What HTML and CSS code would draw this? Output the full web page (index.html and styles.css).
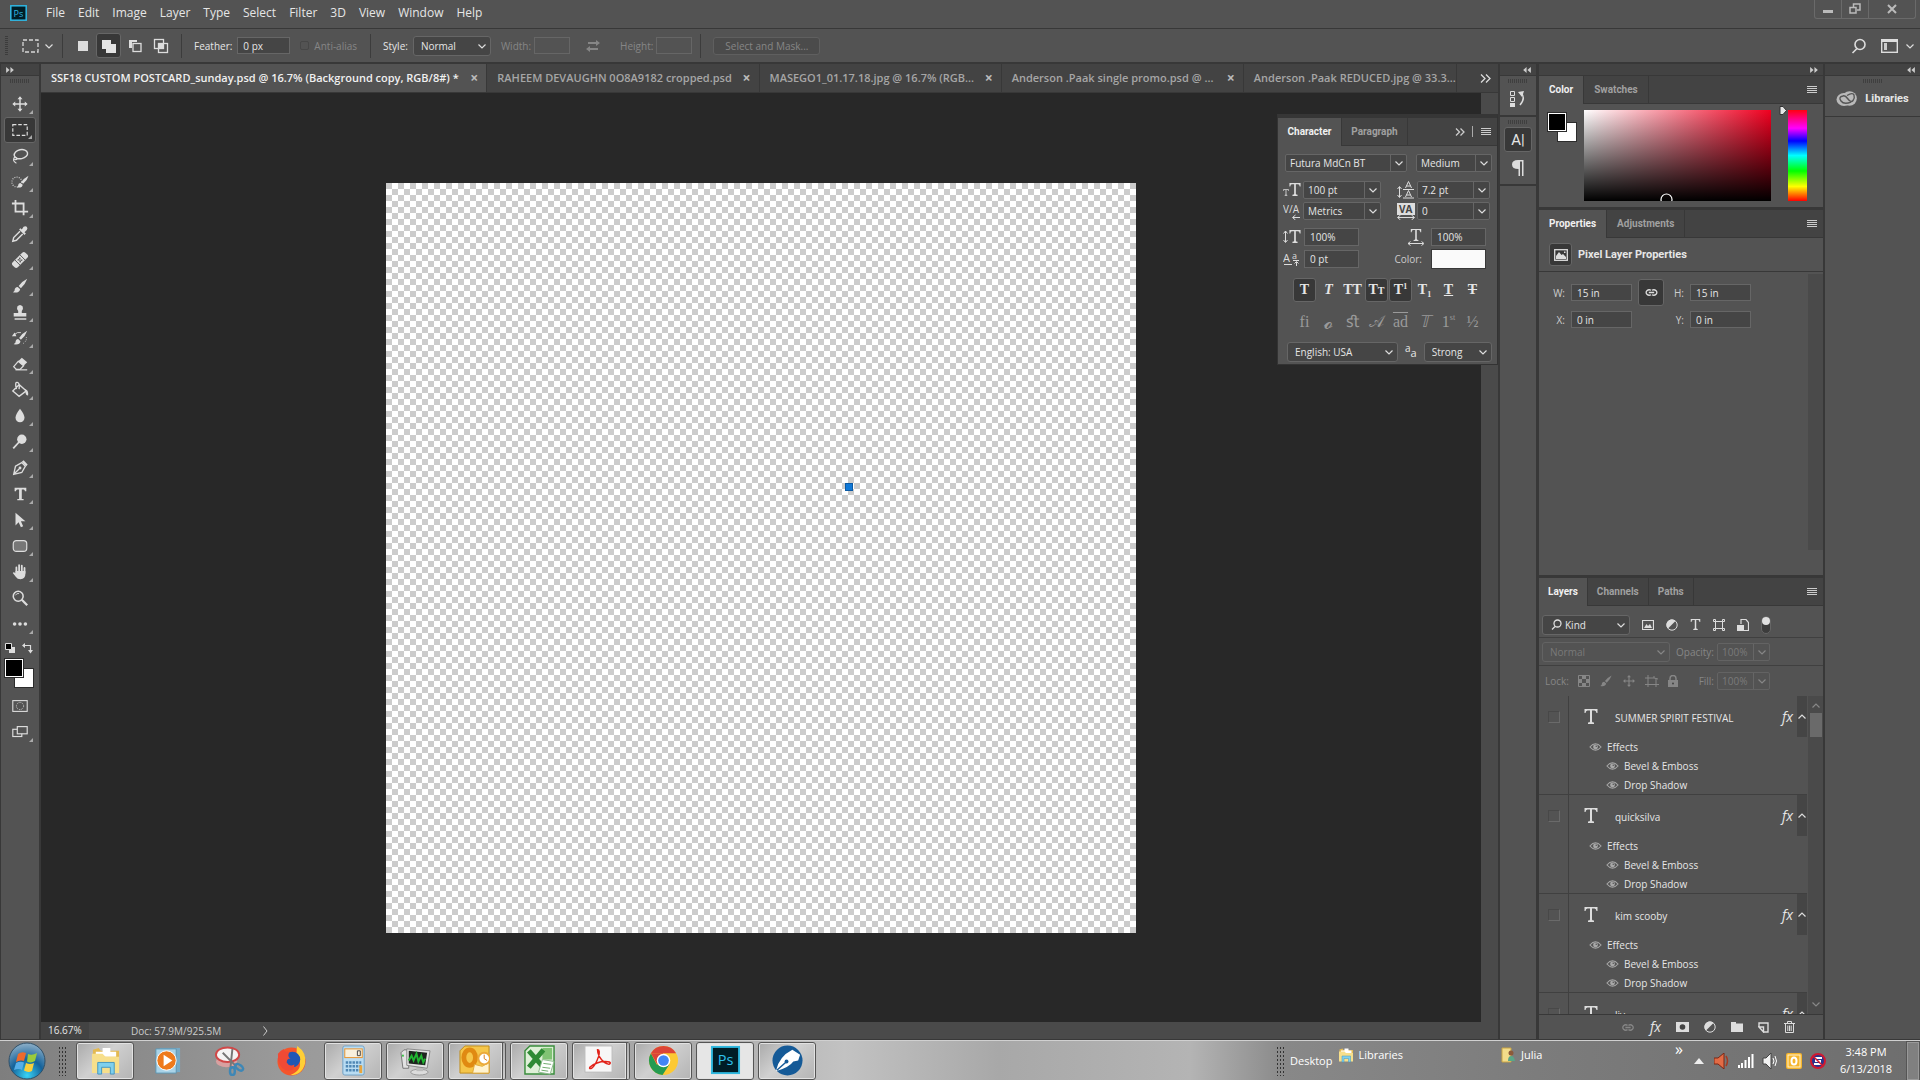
FILE: index.html
```html
<!DOCTYPE html>
<html lang="en">
<head>
<meta charset="utf-8">
<title>SSF18 CUSTOM POSTCARD_sunday.psd</title>
<link rel="stylesheet" href="styles.css">
</head>
<body>
<svg class="defs" aria-hidden="true">
  <symbol id="chev" viewBox="0 0 10 10"><path d="M1.500 3.500 5 7l3.500-3.500" fill="none" stroke="currentColor" stroke-width="1.200"/></symbol>
  <symbol id="eye" viewBox="0 0 14 10"><path d="M1 5Q7-2 13 5Q7 12 1 5Z" fill="none" stroke="currentColor" stroke-width="1.200"/><circle cx="7" cy="5" r="2.600" fill="currentColor"/><circle cx="7.800" cy="4.200" r=".8" fill="#535353"/></symbol>
  <symbol id="bars" viewBox="0 0 10 8"><path d="M0 .5h10M0 2.500h10M0 4.500h10M0 6.500h10" stroke="currentColor"/></symbol>
  <symbol id="typeT" viewBox="0 0 14 15"><path d="M.5 0h13v4h-1q-.3-2.600-2-2.600H8v11q0 1.100 2 1.200V15H4v-1.400q2-.1 2-1.200v-11H3.500Q1.800 1.400 1.500 4h-1Z" fill="currentColor"/></symbol>
  <symbol id="brush" viewBox="0 0 20 20"><path d="M18 2Q12 5 8.500 10l2.500 2.500Q16 8 18 2ZM7.500 11Q4 11 4 15q-.5 1.500-2 2 7 1.500 8.200-3.500Z" fill="currentColor"/></symbol>
  <symbol id="move" viewBox="0 0 20 20"><path d="M10 3v14M3 10h14" stroke="currentColor" stroke-width="1.600"/><path d="m10 1.500 2.800 3.200H7.200Zm0 17 2.800-3.200H7.200ZM1.500 10l3.200-2.800v5.600Zm17 0-3.200-2.800v5.600Z" fill="currentColor"/></symbol>
  <symbol id="link" viewBox="0 0 16 10"><path d="M7.500 2.500A3.500 3 0 1 0 7.500 7.500M8.500 2.500A3.500 3 0 1 1 8.500 7.500M5 5h6" fill="none" stroke="currentColor" stroke-width="1.500"/></symbol>
  <symbol id="adjust" viewBox="0 0 12 12"><circle cx="6" cy="6" r="5.200" fill="none" stroke="currentColor"/><path d="M9.500 2 2 9.500A5 5 0 0 1 9.500 2Z" fill="currentColor"/></symbol>
  <symbol id="folder" viewBox="0 0 32 32"><path d="M3 5 9 3l2 3h19v21H3Z" fill="#e3b951"/><path d="M6 7h7V3h8v4h6v5H6Z" fill="#fff"/><path d="M2 9h11l3 3h14v17H2Z" fill="#f7df8b"/><path d="M8 18h17v12h-4v-7h-9v7H8Z" fill="#7fd0ed" stroke="#4397c0"/></symbol>
</svg>

<header class="menubar">
  <svg class="pslogo" viewBox="0 0 17 16"><rect x=".8" y=".8" width="15.400" height="14.400" fill="#001d26" stroke="#31b7e2" stroke-width="1.500"/><text x="3.500" y="11.500" font-size="9" fill="#31b7e2">Ps</text></svg>
  <nav class="menus">
    <button>File</button><button>Edit</button><button>Image</button><button>Layer</button><button>Type</button><button>Select</button><button>Filter</button><button>3D</button><button>View</button><button>Window</button><button>Help</button>
  </nav>
  <div class="winctl">
    <button aria-label="Minimize"><svg width="10" height="10"><rect y="6" width="10" height="3" fill="#bbb"/></svg></button>
    <button aria-label="Restore"><svg width="12" height="12" fill="none" stroke="#bbb" stroke-width="1.500"><path d="M4.500 4V1h6.500v6H8"/><rect x="1" y="4.500" width="6" height="5.500"/></svg></button>
    <button class="closewin" aria-label="Close"><svg width="10" height="10"><path d="M1 1l8 8M9 1 1 9" stroke="#bbb" stroke-width="2"/></svg></button>
  </div>
</header>

<section class="options">
  <span class="grip"></span>
  <svg class="marq" width="17" height="14"><rect x="1" y="1" width="15" height="12" fill="none" stroke="#d8d8d8" stroke-width="1.300" stroke-dasharray="4 2"/></svg>
  <svg class="c8"><use href="#chev"/></svg>
  <span class="sep"></span>
  <div class="selmodes">
    <button aria-label="New selection"><svg width="16" height="16"><rect x="3" y="3" width="10" height="10" fill="#ddd"/></svg></button>
    <button class="on" aria-label="Add to selection"><svg width="16" height="16"><path d="M1 2h9v4h5v9H5v-4H1Z" fill="#e4e4e4"/></svg></button>
    <button aria-label="Subtract from selection"><svg width="16" height="16"><path d="M2 2h8v2H5v6H2Z" fill="#ddd"/><rect x="6" y="5.500" width="8" height="8" fill="none" stroke="#ddd" stroke-width="1.300"/></svg></button>
    <button aria-label="Intersect with selection"><svg width="16" height="16" fill="none" stroke="#ddd" stroke-width="1.300"><rect x="1.500" y="1.500" width="9" height="9"/><rect x="5.500" y="5.500" width="9" height="9"/><path d="M6 6h4v4H6Z" fill="#ddd"/></svg></button>
  </div>
  <span class="sep"></span>
  <label>Feather: <input class="field w53" value="0 px"></label>
  <label class="anti dim"><input type="checkbox" disabled> Anti-alias</label>
  <span class="sep"></span>
  <label class="stylelab">Style: <span class="sel w78"><select><option>Normal</option></select><svg class="c10"><use href="#chev"/></svg></span></label>
  <label class="dim">Width: <input class="field w36 off" disabled></label>
  <svg class="swap dim" width="16" height="14" fill="none" stroke="currentColor" stroke-width="2"><path d="M3 4h9M4 10h9"/><path d="M11 1v6l4-3ZM5 7v6l-4-3Z" fill="currentColor" stroke="none"/></svg>
  <label class="dim">Height: <input class="field w36 off" disabled></label>
  <span class="sep"></span>
  <button class="mask dim" disabled>Select and Mask...</button>
  <span class="grow"></span>
  <svg width="16" height="16" fill="none" stroke="#ddd" stroke-width="1.600"><circle cx="9" cy="6.500" r="5"/><path d="M6 10.500 1.500 15"/></svg>
  <svg class="wsicon" width="17" height="14"><rect x=".7" y=".7" width="15.600" height="12.600" fill="none" stroke="#ddd" stroke-width="1.400"/><path d="M1 2h15" stroke="#ddd" stroke-width="2"/><path d="M3 4h3v7H3Z" fill="#ccc"/></svg>
  <svg class="c8"><use href="#chev"/></svg>
</section>

<main class="work">
  <aside class="toolcol">
    <div class="colhead left"><svg class="dbl r" viewBox="0 0 9 7"><path d="M0 0l4 3.500L0 7ZM5 0l4 3.500L5 7Z"/></svg></div>
    <div class="tools">
      <span class="hgrip"></span>
      <button class="tool" aria-label="Move"><svg viewBox="0 0 20 20"><use href="#move"/></svg></button>
      <button class="tool on" aria-label="Marquee"><svg viewBox="0 0 20 20"><rect x="2" y="4" width="16" height="12" fill="none" stroke="currentColor" stroke-width="1.300" stroke-dasharray="4 2"/></svg></button>
      <button class="tool" aria-label="Lasso"><svg viewBox="0 0 20 20"><ellipse cx="11" cy="8" rx="7.500" ry="5" transform="rotate(-12 11 8)" fill="none" stroke="currentColor" stroke-width="1.600"/><path d="M4 11q-2 3 1 3t1-2-3 1 3 5" fill="none" stroke="currentColor" stroke-width="1.200"/></svg></button>
      <button class="tool" aria-label="Quick selection"><svg viewBox="0 0 20 20"><circle cx="6.500" cy="10" r="5.500" fill="none" stroke="currentColor" stroke-width="1.300" stroke-dasharray="1 1.500"/><path d="M19.500 3Q14 6 11.500 10l2 2Q18 8.500 19.500 3ZM10.500 11Q8 11 8 14q-.5 1.500-1.500 2 6 1 6.500-3Z" fill="currentColor"/></svg></button>
      <button class="tool" aria-label="Crop"><svg viewBox="0 0 20 20" fill="none" stroke="currentColor" stroke-width="2"><path d="M5 1v13h14M1 5h13v13"/></svg></button>
      <button class="tool" aria-label="Eyedropper"><svg viewBox="0 0 20 20"><path d="M10 7 3 14l-1 4 4-1 7-7" fill="none" stroke="currentColor" stroke-width="1.600"/><path d="m9 5 1.500-1.500L12 5l2-3q2-1.500 3.500 0t0 3.500L15 8l1.500 1.500L15 11Z" fill="currentColor"/></svg></button>
      <button class="tool" aria-label="Healing brush"><svg viewBox="0 0 20 20"><g transform="rotate(-45 10 10)"><rect x="0" y="6" width="20" height="8" rx="2.500" fill="currentColor"/><path d="M6 6v8M14 6v8" stroke="#535353"/><path d="M8 8.500h1.500M10.500 8.500H12M8 11.500h1.500M10.500 11.500H12M9.200 10h1.500" stroke="#444" stroke-width="1.300"/></g></svg></button>
      <button class="tool" aria-label="Brush"><svg viewBox="0 0 20 20"><use href="#brush"/></svg></button>
      <button class="tool" aria-label="Clone stamp"><svg viewBox="0 0 20 20"><path d="M8 9Q6 6.500 7 4q3-3.500 6 0 1 2.500-1 5v2h5v4H3v-4h5ZM4 17h13v1.500H4Z" fill="currentColor"/></svg></button>
      <button class="tool" aria-label="History brush"><svg viewBox="0 0 20 20"><path d="M18 2Q12 5 9 10l2 2Q16 8 18 2ZM8 11Q5 11 5 15l-2 2q7 1 7.500-3.500ZM1 8l3-4 2 4Z" fill="currentColor"/><path d="M4 6q3-3 7-2" fill="none" stroke="currentColor"/><path d="M17 9q1 5-5 8" fill="none" stroke="currentColor" stroke-dasharray="1 1.500"/></svg></button>
      <button class="tool" aria-label="Eraser"><svg viewBox="0 0 20 20"><path d="m12 3 6 5-4 4-6-5Z" fill="currentColor"/><path d="m8 7 6 5-4 4H6l-3-3Z" fill="none" stroke="currentColor" stroke-width="1.400"/><path d="M5 16.500h13" stroke="currentColor" stroke-width="1.300"/></svg></button>
      <button class="tool" aria-label="Paint bucket"><svg viewBox="0 0 20 20"><path d="m9 4 8 7-8 6-7-6ZM6 9Q4 1 7 1.500T9 9" fill="none" stroke="currentColor" stroke-width="1.500"/><path d="M15 9q5 1 4 7-3 0-3-5Z" fill="currentColor"/></svg></button>
      <button class="tool" aria-label="Blur"><svg viewBox="0 0 20 20"><path d="M10 2Q5 8.500 5 12a5 5 0 0 0 10 0Q15 8.500 10 2Z" fill="currentColor"/></svg></button>
      <button class="tool" aria-label="Dodge"><svg viewBox="0 0 20 20"><circle cx="12" cy="7" r="5.200" fill="currentColor"/><path d="m9 10-6.500 7" stroke="currentColor" stroke-width="2"/></svg></button>
      <button class="tool" aria-label="Pen"><svg viewBox="0 0 20 20"><path d="M3 17 5 8l7-4 4 4-4 7ZM3 17l6-6" fill="none" stroke="currentColor" stroke-width="1.500"/><circle cx="10" cy="10" r="1.600" fill="currentColor"/><path d="m12 3 2-1.500L18.500 6 17 8Z" fill="currentColor"/></svg></button>
      <button class="tool" aria-label="Type"><svg viewBox="0 0 20 20"><path d="M4 3h13v4h-1.500q-.2-2-1.500-2h-2v10.500h2V17H7v-1.500h2V5H7Q5.700 5 5.500 7H4Z" fill="currentColor"/></svg></button>
      <button class="tool" aria-label="Path selection"><svg viewBox="0 0 20 20"><path d="M5 2v14l3.500-3.500L11 18l2.500-1-2.500-5.500h5Z" fill="currentColor"/></svg></button>
      <button class="tool" aria-label="Rounded rectangle"><svg viewBox="0 0 20 20"><rect x="2.500" y="4" width="15" height="12" rx="3.500" fill="#777" stroke="currentColor" stroke-width="1.300"/></svg></button>
      <button class="tool" aria-label="Hand"><svg viewBox="0 0 20 20"><path d="M6 11V5M9 10V2.500M12 10V3M15 11V5.500" stroke="currentColor" stroke-width="2" stroke-linecap="round"/><path d="M5 9h11v3q0 6-5.500 6-3.500 0-5-2.500L2 11q1-1.500 3 .5Z" fill="currentColor"/></svg></button>
      <button class="tool plain" aria-label="Zoom"><svg viewBox="0 0 20 20"><circle cx="8" cy="8" r="5.500" fill="none" stroke="currentColor" stroke-width="1.700"/><path d="m12 12 6 6" stroke="currentColor" stroke-width="2.500"/><path d="M5 7q1-2.500 4-2" fill="none" stroke="currentColor"/></svg></button>
      <button class="tool" aria-label="Edit toolbar"><svg viewBox="0 0 20 20"><circle cx="4" cy="10" r="2" fill="currentColor"/><circle cx="10" cy="10" r="2" fill="currentColor"/><circle cx="16" cy="10" r="2" fill="currentColor"/></svg></button>
      <div class="swrow"><svg width="10" height="10"><path d="M4 4h6v6H4Z" fill="#ddd"/><path d="M.5.500h6v6h-6Z" fill="#000" stroke="#ddd"/></svg><svg width="11" height="11" fill="none" stroke="#ddd" stroke-width="1.200"><path d="M3 2.500h5.500V8"/><path d="M3 0v5L0 2.500ZM6 7h5l-2.500 3.500Z" fill="#ddd" stroke="none"/></svg></div>
      <div class="fgbg"><i class="bg"></i><i class="fg"></i></div>
      <button class="tool plain" aria-label="Quick mask"><svg viewBox="0 0 20 20"><rect x="2" y="4" width="16" height="12" fill="none" stroke="currentColor" stroke-width="1.200"/><circle cx="10" cy="10" r="4" fill="none" stroke="currentColor" stroke-dasharray="1 1.100"/></svg></button>
      <button class="tool" aria-label="Screen mode"><svg viewBox="0 0 20 20" fill="#535353" stroke="currentColor" stroke-width="1.300"><rect x="2" y="7" width="10" height="8"/><rect x="7" y="4" width="11" height="8"/></svg></button>
    </div>
  </aside>

  <section class="doc">
    <div class="tabs">
      <div class="tab active"><span>SSF18 CUSTOM POSTCARD_sunday.psd @ 16.7% (Background copy, RGB/8#) *</span><button aria-label="Close">×</button></div>
      <div class="tab"><span>RAHEEM DEVAUGHN 0O8A9182 cropped.psd</span><button aria-label="Close">×</button></div>
      <div class="tab"><span>MASEGO1_01.17.18.jpg @ 16.7% (RGB...</span><button aria-label="Close">×</button></div>
      <div class="tab"><span>Anderson .Paak single promo.psd @ ...</span><button aria-label="Close">×</button></div>
      <div class="tab"><span>Anderson .Paak REDUCED.jpg @ 33.3...</span></div>
      <button class="more" aria-label="More tabs"><svg width="11" height="9" fill="none" stroke="#ddd" stroke-width="1.300"><path d="M1 .5l4 4-4 4M6 .5l4 4-4 4"/></svg></button>
    </div>
    <div class="view">
      <div class="pasteboard"><div class="sheet"><i class="marker"></i></div></div>
      <div class="vscroll"></div>
    </div>
    <footer class="status"><span class="pct">16.67%</span><span class="docinfo">Doc: 57.9M/925.5M</span><button aria-label="Status options"><svg width="5" height="10" fill="none" stroke="#ccc"><path d="M.5.500 4 5 .5 9.500"/></svg></button></footer>

    <section class="char">
      <div class="ptabs">
        <button class="ptab active ct1">Character</button><button class="ptab ct2">Paragraph</button><span class="grow"></span>
        <svg width="10" height="8" fill="none" stroke="#ccc" stroke-width="1.300"><path d="M1 .5 4.500 4 1 7.500M5.500.500 9 4 5.500 7.500"/></svg><i class="vbar"></i><svg class="bars"><use href="#bars"/></svg>
      </div>
      <div class="charbody">
        <div class="fontrow">
          <span class="combo"><input aria-label="Font" value="Futura MdCn BT"><button aria-label="Fonts"><svg class="c10"><use href="#chev"/></svg></button></span>
          <span class="combo"><input aria-label="Font style" value="Medium"><button aria-label="Styles"><svg class="c10"><use href="#chev"/></svg></button></span>
        </div>
        <div class="metrics">
          <svg width="18" height="17"><svg x="6" y="1" width="12" height="13"><use href="#typeT"/></svg><svg x="0" y="7" width="6" height="7"><use href="#typeT"/></svg></svg>
          <span class="combo"><input aria-label="Size" value="100 pt"><button aria-label="Sizes"><svg class="c10"><use href="#chev"/></svg></button></span>
          <svg width="18" height="18" fill="none" stroke="#ddd"><path d="m8.500 7 3-6.500 3 6.500M9.500 5h4M8.500 16l3-6.500 3 6.500M9.500 14h4M6 8.500h11M6 17h11M2.500 6v10M.5 8l2-2.500L4.500 8M.5 14l2 2.500 2-2.500"/></svg>
          <span class="combo"><input aria-label="Leading" value="7.2 pt"><button aria-label="Leadings"><svg class="c10"><use href="#chev"/></svg></button></span>
          <svg width="18" height="17"><text x="0" y="10" font-size="10" fill="#ddd">V/A</text><path d="M10 14.500h7M12.500 12l-3 2.500 3 2.500" fill="none" stroke="#ddd"/></svg>
          <span class="combo"><input aria-label="Kerning" value="Metrics"><button aria-label="Kernings"><svg class="c10"><use href="#chev"/></svg></button></span>
          <svg width="18" height="17"><rect width="18" height="12" fill="#ddd"/><text x="2" y="10" font-size="10" font-weight="700" fill="#444">VA</text><path d="M1 14.500h16M3.500 12l-3 2.500 3 2.500M14.500 12l3 2.500-3 2.500" fill="none" stroke="#ddd"/></svg>
          <span class="combo"><input aria-label="Tracking" value="0"><button aria-label="Trackings"><svg class="c10"><use href="#chev"/></svg></button></span>
        </div>
        <div class="scales">
          <svg width="18" height="16"><svg x="6" y="1" width="12" height="13"><use href="#typeT"/></svg><path d="M2.500 2v11M.5 4.500l2-2.500 2 2.500M.5 11l2 2.500 2-2.500" fill="none" stroke="#ddd"/></svg>
          <input class="field" aria-label="Vertical scale" value="100%">
          <svg class="right" width="18" height="17"><svg x="3" y="0" width="12" height="12"><use href="#typeT"/></svg><path d="M1 14.500h15M3.500 12.500l-2.500 2 2.500 2M14.500 12.500l2.500 2-2.500 2" fill="none" stroke="#ddd"/></svg>
          <input class="field" aria-label="Horizontal scale" value="100%">
          <svg width="18" height="16"><text x="0" y="11" font-size="11" fill="#ddd">A</text><text x="9" y="8" font-size="9" fill="#ddd">a</text><path d="M1 13.500h8M10 9.500h6M13.500 15v-4M11.500 12.500l2-2 2 2" fill="none" stroke="#ddd"/></svg>
          <input class="field" aria-label="Baseline shift" value="0 pt">
          <span class="right">Color:</span><button class="colorbtn" aria-label="Text color"></button>
        </div>
        <div class="glyphs">
          <button class="on"><b>T</b></button><button><i>T</i></button><button>TT</button><button class="on">T<small>T</small></button><button class="on">T<sup>1</sup></button><button>T<sub>1</sub></button><button><u>T</u></button><button><s>T</s></button>
        </div>
        <div class="glyphs ot">
          <button>fi</button><button class="swash">&#x1D4F8;</button><button>ﬆ</button><button>&#x1D49C;</button><button class="over">ad</button><button><i>&#x1D54B;</i></button><button>1<sup>st</sup></button><button>½</button>
        </div>
        <div class="langrow">
          <span class="sel lang"><select aria-label="Language"><option>English: USA</option></select><svg class="c10"><use href="#chev"/></svg></span>
          <span class="aa"><sup>a</sup>a</span>
          <span class="sel"><select aria-label="Anti-aliasing"><option>Strong</option></select><svg class="c10"><use href="#chev"/></svg></span>
        </div>
      </div>
    </section>
  </section>

  <aside class="dock">
    <div class="colhead"><svg class="dbl" viewBox="0 0 9 7"><path d="M4 0 0 3.500 4 7ZM9 0 5 3.500 9 7Z"/></svg></div>
    <div class="dgroup"><span class="hgrip"></span><button aria-label="History"><svg width="18" height="18"><path d="M1.500 1.500h4v4h-4ZM1.500 7.500h4v4h-4Z" fill="none" stroke="#ddd"/><path d="M1 13h5v4H1ZM9 2l6-1-2 6Z" fill="#ddd"/><path d="M12 3q5 5-1 12" fill="none" stroke="#ddd" stroke-width="1.500"/></svg></button></div>
    <div class="dgroup two"><span class="hgrip"></span><button class="on" aria-label="Character"><span class="abar">A|</span></button><button aria-label="Paragraph"><svg width="12" height="16"><path d="M11.500 0v16H10V1.500H8V16H6.500V9Q0 9 0 4.500T6 0Z" fill="#ddd"/></svg></button></div>
    <div class="fill"></div>
  </aside>

  <aside class="panels">
    <div class="colhead"><svg class="dbl" viewBox="0 0 9 7"><path d="M0 0l4 3.500L0 7ZM5 0l4 3.500L5 7Z"/></svg></div>
    <section class="panel">
      <div class="ptabs"><button class="ptab active">Color</button><button class="ptab">Swatches</button><span class="grow"></span><svg class="bars"><use href="#bars"/></svg></div>
      <div class="colorbody">
        <div class="fgbg big"><i class="bg"></i><i class="fg"></i></div>
        <div class="field2d"><svg class="ring" width="13" height="8"><circle cx="6.500" cy="6.500" r="5.500" fill="none" stroke="#fff" stroke-width="1.200"/></svg></div>
        <svg class="huearrow" width="8" height="9"><path d="M1 .5h3L7.500 4.500 4 8.500H1Z" fill="#e6e6e6" stroke="#333"/></svg>
        <div class="hue"></div>
      </div>
    </section>
    <section class="panel props">
      <div class="ptabs"><button class="ptab active">Properties</button><button class="ptab">Adjustments</button><span class="grow"></span><svg class="bars"><use href="#bars"/></svg></div>
      <div class="phead"><span class="pic"><svg width="14" height="12"><rect x=".7" y=".7" width="12.600" height="10.600" fill="none" stroke="#ddd" stroke-width="1.300"/><path d="M2 10V7l3-4 2.500 3L9 5l3 3v2Z" fill="#ddd"/><path d="M10 2.500h1.500V4H10Z" fill="#ddd"/></svg></span><b>Pixel Layer Properties</b></div>
      <div class="pbody">
        <div class="xywh">
          <label for="pw">W:</label><input id="pw" class="field" value="15 in"><button class="linkbtn" aria-label="Link"><svg width="15" height="9"><use href="#link"/></svg></button><label for="ph">H:</label><input id="ph" class="field" value="15 in">
          <label for="px">X:</label><input id="px" class="field" value="0 in"><span></span><label for="py">Y:</label><input id="py" class="field" value="0 in">
        </div>
        <div class="pscroll"></div>
      </div>
    </section>
    <section class="panel layers">
      <div class="ptabs"><button class="ptab active">Layers</button><button class="ptab">Channels</button><button class="ptab">Paths</button><span class="grow"></span><svg class="bars"><use href="#bars"/></svg></div>
      <div class="lrow filter">
        <span class="sel w88 kind"><svg class="mag" width="11" height="11" fill="none" stroke="#ddd" stroke-width="1.300"><circle cx="6.500" cy="4.500" r="3.500"/><path d="M4 7.500 1 10.500"/></svg><select aria-label="Filter kind"><option>Kind</option></select><svg class="c10"><use href="#chev"/></svg></span>
        <div class="ficons">
          <svg width="12" height="12"><path d="M.5 1.500h11v9H.5Z" fill="none" stroke="#ddd" stroke-width="1.200"/><path d="m2 9 2.500-4L6 7l2-2 2 4Z" fill="#ddd"/></svg>
          <svg width="12" height="12"><use href="#adjust"/></svg>
          <svg width="11" height="11"><use href="#typeT"/></svg>
          <svg width="12" height="12" fill="none" stroke="#ddd"><path d="M2.500 2.500h7v7h-7Z"/><path d="M.5.500h2v2h-2ZM9.500.500h2v2h-2ZM.5 9.500h2v2h-2ZM9.500 9.500h2v2h-2Z"/></svg>
          <svg width="12" height="12"><path d="M4 5V.5h5l2.500 3v8H7" fill="none" stroke="#ddd" stroke-width="1.200"/><path d="M0 6h7v6H0Z" fill="#ddd"/></svg>
        </div>
        <svg class="toggle" width="10" height="18"><rect x=".5" y=".5" width="9" height="17" rx="4.500" fill="#3c3c3c" stroke="#666"/><circle cx="5" cy="5" r="4" fill="#e0e0e0"/></svg>
      </div>
      <div class="lrow dim">
        <span class="sel w128 off"><select aria-label="Blend mode" disabled><option>Normal</option></select><svg class="c10"><use href="#chev"/></svg></span>
        <label class="pctlab" for="op">Opacity:</label><span class="combo off"><input id="op" value="100%" disabled><button aria-label="Opacity slider" disabled><svg class="c10"><use href="#chev"/></svg></button></span>
      </div>
      <div class="lrow lock dim">
        <span class="locklab">Lock:</span>
        <div class="licons">
          <svg width="12" height="12"><path d="M.5.500h11v11H.5Z" fill="none" stroke="currentColor"/><path d="M4 1h4v3H4ZM1 4h3v4H1ZM8 4h3v4H8ZM4 8h4v3H4Z" fill="currentColor"/></svg>
          <svg width="14" height="14"><use href="#brush"/></svg>
          <svg width="14" height="14"><use href="#move"/></svg>
          <svg width="14" height="12" fill="none" stroke="currentColor"><path d="M3 0v12M0 3h9M11 3v9M0 9.500h14M9 1v2l4 1"/></svg>
          <svg width="10" height="12"><path d="M0 5h10v7H0Z" fill="currentColor"/><path d="M2 5V3.500a3 3 0 0 1 6 0V5" fill="none" stroke="currentColor" stroke-width="1.500"/><circle cx="5" cy="8.500" r="1" fill="#444"/></svg>
        </div>
        <label class="pctlab fill-label" for="fl">Fill:</label><span class="combo off"><input id="fl" value="100%" disabled><button aria-label="Fill slider" disabled><svg class="c10"><use href="#chev"/></svg></button></span>
      </div>
      <div class="listwrap">
        <ul class="list">
          <li><span class="vis"><input type="checkbox" aria-label="Show layer"></span><div class="lay"><div class="lname"><svg width="14" height="15"><use href="#typeT"/></svg><span>SUMMER SPIRIT FESTIVAL</span><em>fx</em><button aria-label="Collapse"><svg class="c8 up"><use href="#chev"/></svg></button></div><p><svg class="eye"><use href="#eye"/></svg>Effects</p><p class="in"><svg class="eye"><use href="#eye"/></svg>Bevel &amp; Emboss</p><p class="in"><svg class="eye"><use href="#eye"/></svg>Drop Shadow</p></div></li>
          <li><span class="vis"><input type="checkbox" aria-label="Show layer"></span><div class="lay"><div class="lname"><svg width="14" height="15"><use href="#typeT"/></svg><span>quicksilva</span><em>fx</em><button aria-label="Collapse"><svg class="c8 up"><use href="#chev"/></svg></button></div><p><svg class="eye"><use href="#eye"/></svg>Effects</p><p class="in"><svg class="eye"><use href="#eye"/></svg>Bevel &amp; Emboss</p><p class="in"><svg class="eye"><use href="#eye"/></svg>Drop Shadow</p></div></li>
          <li><span class="vis"><input type="checkbox" aria-label="Show layer"></span><div class="lay"><div class="lname"><svg width="14" height="15"><use href="#typeT"/></svg><span>kim scooby</span><em>fx</em><button aria-label="Collapse"><svg class="c8 up"><use href="#chev"/></svg></button></div><p><svg class="eye"><use href="#eye"/></svg>Effects</p><p class="in"><svg class="eye"><use href="#eye"/></svg>Bevel &amp; Emboss</p><p class="in"><svg class="eye"><use href="#eye"/></svg>Drop Shadow</p></div></li>
          <li><span class="vis"><input type="checkbox" aria-label="Show layer"></span><div class="lay"><div class="lname"><svg width="14" height="15"><use href="#typeT"/></svg><span>liv</span><em>fx</em><button aria-label="Collapse"><svg class="c8 up"><use href="#chev"/></svg></button></div></div></li>
        </ul>
        <div class="lscroll"><svg class="c8 up"><use href="#chev"/></svg><i></i><svg class="c8"><use href="#chev"/></svg></div>
      </div>
      <div class="lfoot">
        <button class="dim" aria-label="Link layers"><svg width="14" height="9"><use href="#link"/></svg></button>
        <button aria-label="Layer style"><em>fx</em></button>
        <button aria-label="Add mask"><svg width="13" height="10"><path d="M0 0h13v10H0Z" fill="#ddd"/><circle cx="6.500" cy="5" r="2.800" fill="#444"/></svg></button>
        <button aria-label="Adjustment layer"><svg width="12" height="12"><use href="#adjust"/></svg></button>
        <button aria-label="New group"><svg width="12" height="10"><path d="M0 0h5v1.500h7V10H0Z" fill="#ddd"/></svg></button>
        <button aria-label="New layer"><svg width="11" height="11" fill="none" stroke="#ddd" stroke-width="1.400"><path d="M1 5V1h9v9H5.500ZM1 5h4.500v5Z"/></svg></button>
        <button aria-label="Delete"><svg width="11" height="12" fill="none" stroke="#ddd"><path d="M0 2.500h11M3.500 2V.5h4V2M1.500 3v8.500h8V3M3.800 4.500v5.500M5.500 4.500v5.500M7.200 4.500v5.500"/></svg></button>
      </div>
    </section>
  </aside>

  <aside class="libs">
    <div class="colhead"><svg class="dbl" viewBox="0 0 9 7"><path d="M4 0 0 3.500 4 7ZM9 0 5 3.500 9 7Z"/></svg></div>
    <div class="libgroup"><span class="hgrip"></span><button><svg width="22" height="16"><ellipse cx="8" cy="8.500" rx="7.500" ry="6.500" fill="#b9b9b9"/><circle cx="13.500" cy="7.500" r="7.300" fill="#b9b9b9"/><path d="M15 11Q8 14 5 10t2-5q2-1 5 3t5 1.500 1-5.500-7 .5" fill="none" stroke="#555" stroke-width="1.400"/></svg><b>Libraries</b></button></div>
    <div class="fill"></div>
  </aside>
</main>

<footer class="taskbar">
  <button class="start" aria-label="Start"><svg width="38" height="38" viewBox="0 0 38 38"><defs><radialGradient id="orb" cx=".5" cy=".9" r=".9"><stop offset="0" stop-color="#38d3f5"/><stop offset=".5" stop-color="#14629b"/><stop offset="1" stop-color="#8fb0c8"/></radialGradient></defs><circle cx="19" cy="19" r="18" fill="url(#orb)" stroke="#305068"/><path d="M10 12q4-3 8-1l-2 8q-4-1.500-8 1Z" fill="#ee6a2c"/><path d="M20 12q4 2 9-1l-2 8q-4 2.500-8 .5Z" fill="#9bcb3c"/><path d="M8 21q4-2 8-.5l-2 7.500q-3-2-8 0Z" fill="#56aee8"/><path d="M18 21q4 2 8 0l-2 8q-4 2-8-.5Z" fill="#f9cf3c"/></svg></button>
  <span class="dots"></span>
  <div class="apps">
    <button class="app run" aria-label="Explorer"><svg viewBox="0 0 32 32"><use href="#folder"/></svg></button>
    <button class="app" aria-label="Media player"><svg viewBox="0 0 32 32"><path d="M8 3h21v25H8Z" fill="#77aac6"/><path d="M4 4h21v25H4Z" fill="#a9d3e8" stroke="#5e94b0"/><circle cx="15" cy="16" r="10" fill="#ee7a1c" stroke="#fff"/><path d="m12 10 9 6-9 6Z" fill="#fff"/></svg></button>
    <button class="app" aria-label="Snipping tool"><svg viewBox="0 0 32 32"><ellipse cx="13" cy="17" rx="11" ry="6" fill="#d8a0a0"/><ellipse cx="14" cy="10" rx="12" ry="7.500" fill="#f4f4f4" stroke="#d04848" stroke-width="2"/><path d="m9 8 14 14M19 4l-2 19" stroke="#777" stroke-width="2"/><ellipse cx="19" cy="27" rx="2.500" ry="4" fill="none" stroke="#3e87b6" stroke-width="2.500"/><ellipse cx="26" cy="23" rx="4.500" ry="2.500" transform="rotate(35 26 23)" fill="none" stroke="#3e87b6" stroke-width="2.500"/></svg></button>
    <button class="app" aria-label="Firefox"><svg viewBox="0 0 32 32"><circle cx="16" cy="17" r="14.500" fill="#f5552b"/><path d="M22 1q10 7 8 18-3 12-15 12 14-6 8-17-3-6-1-13Z" fill="#ffcf36"/><circle cx="17" cy="15" r="8" fill="#2157b5"/><path d="M2 9q3-4 6-5 0 3 6 3-3 5 1 7-4 0-4 4 3 5 8 2 0 8-9 6-9-4-8-17Z" fill="#f04a35"/></svg></button>
    <button class="app run" aria-label="Calculator"><svg viewBox="0 0 32 32"><rect x="5" y="1" width="22" height="30" rx="2" fill="#b9dcf2" stroke="#6fa0c4"/><rect x="7" y="4" width="18" height="9" fill="#f8f0dc" stroke="#e6922e"/><path d="M20 6h3v5h-3Z" fill="none" stroke="#444"/><path d="M8 18h16M8 22h16M8 26h16" stroke="#4f87b4" stroke-width="2.500" stroke-dasharray="2.500 1"/><path d="M22 21h3v8h-3Z" fill="#e9a53c"/></svg></button>
    <button class="app run" aria-label="Monitor"><svg viewBox="0 0 32 32"><path d="M1 8 4 5h5v19H3Z" fill="#e2e2e2" stroke="#777"/><path d="M2 10h2v2H2Z" fill="#3dc24a"/><ellipse cx="20" cy="28" rx="9" ry="3" fill="#dcdcdc" stroke="#999"/><path d="M17 22h7v5h-7Z" fill="#bbb"/><path d="m7 4 24 2-3 18-21-3Z" fill="#e4e4e4" stroke="#888"/><path d="m9 6 19 2-2 13-17-2Z" fill="#1d241e"/><path d="m9 16 3-5 2 5 3-7 2 8 3-6 2 7 2-4" fill="none" stroke="#20b531" stroke-width="2"/></svg></button>
    <button class="app run stack" aria-label="Outlook"><svg viewBox="0 0 32 32"><path d="M6 1h25v28H1V6Z" fill="#f5c64a" stroke="#c08b19"/><ellipse cx="11" cy="13" rx="6" ry="8" fill="none" stroke="#e08a12" stroke-width="5"/><path d="m14 29 2-9 8 2 7-4v11Z" fill="#fff3cf" stroke="#e0a93a"/><circle cx="26" cy="14" r="6" fill="#fff" stroke="#eba93b" stroke-width="2"/><path d="M26 10v4l3 2" fill="none" stroke="#d77a18"/></svg></button>
    <button class="app run" aria-label="Excel"><svg viewBox="0 0 32 32"><path d="M6 1h25v29H1V6Z" fill="#dff0d8" stroke="#3a8d3c" stroke-width="1.500"/><path d="M19 3h10v12H19Z" fill="#80c374"/><path d="m5 6 15 17M20 5 5 23" stroke="#2f8a35" stroke-width="5"/><path d="m19 15 12 2-4 13-12-2Z" fill="#fff" stroke="#8bb88b"/><path d="m20 19 8 1m-9 3 8 1m-9 2 7 1" stroke="#6daa6b"/></svg></button>
    <button class="app run stack" aria-label="Acrobat"><svg viewBox="0 0 32 32"><path d="M2 1h28v27H2Z" fill="#f7f7f7" stroke="#bbb"/><path d="M15 5q3 0 1 7-3 9-7 12-3 1-2-1 7-6 16-6 6 0 5 2t-6-1Q15 12 15 5Z" fill="none" stroke="#e2231a" stroke-width="1.500"/></svg></button>
    <button class="app run" aria-label="Chrome"><svg viewBox="0 0 32 32"><circle cx="16" cy="16" r="15" fill="#fcc934"/><path d="M3 8.500A15 15 0 0 1 29 8.500H16Z" fill="#dc4437"/><path d="M3 8.500A15 15 0 0 0 15 31l7-11-13 0Z" fill="#259b51"/><path d="M3 8.500 9.500 20 16 8.500Z" fill="#dc4437"/><circle cx="16" cy="16" r="7" fill="#fff"/><circle cx="16" cy="16" r="5.500" fill="#4285f4"/></svg></button>
    <button class="app run lit" aria-label="Photoshop"><svg viewBox="0 0 32 32"><rect x="2" y="2" width="28" height="27" fill="#001d26" stroke="#2fb8df" stroke-width="2"/><text x="8" y="21" font-size="15" fill="#2fc1ec">Ps</text></svg></button>
    <button class="app run" aria-label="Pen app"><svg viewBox="0 0 32 32"><circle cx="16" cy="16" r="15.500" fill="#155a97"/><path d="M4 27Q7 12 21 5l8 5-2 6-5 1Q18 23 4 27Z" fill="#fff"/><path d="m5 26 9-8" stroke="#155a97" stroke-width="1.500"/><circle cx="15" cy="17" r="2" fill="#155a97"/></svg></button>
  </div>
  <span class="grow"></span>
  <span class="dots"></span>
  <div class="deskbar"><span>Desktop</span><a href="#lib"><svg width="16" height="16" viewBox="0 0 32 32"><use href="#folder"/></svg>Libraries</a><a class="julia" href="#julia"><svg width="16" height="16"><path d="M1 1h9v14H1Z" fill="#f3dc8a" stroke="#c8a445"/><circle cx="10" cy="6" r="2.500" fill="#8c5a3a"/><path d="M7 14q0-5 3-5t4 5Z" fill="#5aa687"/></svg>Julia</a><button aria-label="More">»</button></div>
  <div class="tray">
    <svg width="10" height="6"><path d="M0 6 5 0l5 6Z" fill="#eee"/></svg>
    <svg width="16" height="16"><path d="M0 5h4l6-5v16l-6-5H0Z" fill="#e26b45" stroke="#7a2715"/><path d="M12 3q3 5 0 10" fill="none" stroke="#a43a22" stroke-width="1.500"/></svg>
    <svg width="16" height="14"><path d="M0 11h2v3H0ZM3 9h2v5H3ZM6.500 6h2v8h-2ZM10 3h2v11h-2ZM13.500 0h2v14h-2Z" fill="#fff"/></svg>
    <svg width="16" height="16"><path d="M1 5h3l5-5v16l-5-5H1Z" fill="#f2f2f2" stroke="#444"/><path d="M11 5q2 3 0 6M13 3q3 5 0 10" fill="none" stroke="#fff"/></svg>
    <svg width="16" height="16"><rect width="16" height="16" rx="2" fill="#f6b52c"/><rect x="2" y="2" width="12" height="12" fill="none" stroke="#fff4cf"/><ellipse cx="8" cy="8" rx="2.500" ry="3.500" fill="none" stroke="#fff" stroke-width="2"/></svg>
    <svg width="16" height="16"><circle cx="8" cy="8" r="7" fill="#28358e" stroke="#d01830" stroke-width="2"/><path d="M12 5H6v3h4v3H4" fill="none" stroke="#fff" stroke-width="2"/><path d="m3 3 10 10" stroke="#d01830" stroke-width="1.500"/></svg>
  </div>
  <div class="clock"><span>3:48 PM</span><span>6/13/2018</span></div>
  <button class="peek" aria-label="Show desktop"></button>
</footer>
</body>
</html>
```
FILE: styles.css
```css
* { box-sizing: border-box; }
html, body { height: 100%; }
body {
  margin: 0;
  display: flex;
  flex-direction: column;
  overflow: hidden;
  background: #535353;
  color: #e6e6e6;
  font: 10px/14px "Open Sans", Roboto, sans-serif;
}
button, input, select { font: inherit; color: inherit; margin: 0; padding: 0; border: 0; background: none; border-radius: 0; }
button { display: flex; align-items: center; justify-content: center; }
svg { display: block; flex: none; color: #ddd; }
ul, p { margin: 0; padding: 0; list-style: none; }
.defs { position: absolute; width: 0; height: 0; }
.grow { flex: 1; }
.dim, .dim svg { color: #868686; }
.c8, .c10 { width: 10px; height: 10px; }
.up { transform: rotate(180deg); }

/* menu bar */
.menubar { flex: none; height: 29px; display: flex; align-items: flex-start; border-bottom: 1px solid #383838; padding-left: 10px; }
.pslogo { width: 17px; height: 16px; margin-top: 5px; }
.menus { display: flex; gap: 13px; padding: 5px 0 0 19px; flex: 1; }
.menus button { font: 12px/16px "Open Sans", sans-serif; }
.winctl { display: flex; height: 19px; margin-right: 4px; border: 1px solid #6a6a6a; border-top: 0; border-radius: 0 0 3px 3px; }
.winctl button { width: 27px; border-right: 1px solid #6a6a6a; }
.winctl .closewin { width: 46px; border: 0; }

/* options bar */
.options { flex: none; height: 34px; display: flex; align-items: center; padding: 0 5px; border-bottom: 1px solid #383838; }
.grip { width: 3px; height: 20px; background: repeating-linear-gradient(#3c3c3c 0 1px, transparent 1px 2px); margin-right: 14px; }
.options .marq { margin-right: 5px; }
.sep { width: 1px; height: 24px; background: #3c3c3c; margin: 0 12px 0 8px; }
.selmodes { display: flex; gap: 1px; margin-left: -5px; }
.selmodes button { width: 25px; height: 25px; border-radius: 3px; }
.selmodes .on, .glyphs .on, .tool.on, .dgroup .on, .linkbtn, .pic { background: #383838; border: 1px solid #666; border-radius: 3px; }
.options label { display: flex; align-items: center; gap: 5px; }
.options .stylelab ~ label { gap: 3px; }
.field { height: 17px; border: 1px solid #666; background: #454545; padding: 0 5px; width: 100%; min-width: 0; }
.options .w53 { width: 53px; }
.w36 { width: 36px; }
.w78 { width: 78px; }
.w88 { width: 88px; }
.w128 { width: 128px; }
.field.off { background: transparent; }
.options .anti { margin: 0 5px 0 10px; }
.anti input { appearance: none; width: 9px; height: 9px; border: 1px solid #474747; border-radius: 2px; }
.stylelab { margin-right: 10px; }
.swap { margin: 0 19px 0 15px; }
.mask { height: 18px; width: 107px; border: 1px solid #5f5f5f; background: #4b4b4b; border-radius: 3px; color: #868686; }
.wsicon { margin: 0 7px 0 14px; }
.sel { position: relative; display: flex; align-items: center; height: 20px; border: 1px solid #666; border-radius: 3px; background: #454545; }
.sel select { appearance: none; flex: 1; height: 100%; padding: 0 20px 0 7px; outline: 0; opacity: 1; }
.sel .c10 { position: absolute; right: 3px; pointer-events: none; }
.sel.off, .combo.off { background: transparent; border-color: #636363; color: #7a7a7a; }

/* work area */
.work { flex: 1; min-height: 0; display: flex; background: #383838; padding: 1px 0; }
.colhead { flex: none; height: 12px; background: #434343; display: flex; align-items: center; justify-content: flex-end; padding-right: 5px; border-bottom: 1px solid #383838; }
.colhead.left { justify-content: flex-start; padding-left: 5px; }
.dbl { width: 8px; height: 6px; fill: #ccc; }
.hgrip { height: 4px; width: 20px; background: repeating-linear-gradient(90deg, #3f3f3f 0 1px, transparent 1px 2px); }
.toolcol { width: 41px; padding: 0 2px 0 1px; display: flex; flex-direction: column; flex: none; }
.tools { flex: 1; background: #535353; display: flex; flex-direction: column; align-items: center; padding-top: 3px; }
.tools .hgrip { margin-bottom: 8px; }
.tool { position: relative; width: 32px; height: 26px; flex: none; }
.tool svg { width: 18px; height: 18px; }
.tool::after { content: ""; position: absolute; right: 3px; bottom: 3px; border: 2px solid transparent; border-right-color: #aaa; border-bottom-color: #aaa; }
.tool.plain::after { display: none; }
.swrow { display: flex; gap: 7px; padding: 6px 0; height: 21px; margin-right: 2px; }
.fgbg { position: relative; width: 30px; height: 30px; margin: 0 2px 5px 0; }
.fgbg i { position: absolute; width: 20px; height: 20px; border: 1px solid #2c2c2c; }
.fgbg .fg { left: 0; top: 0; background: #000; box-shadow: inset 0 0 0 1px #fff; }
.fgbg .bg { right: 0; bottom: 0; background: #fff; }

/* document */
.doc { flex: 1; min-width: 0; display: flex; flex-direction: column; position: relative; }
.tabs { flex: none; height: 29px; display: grid; grid-template-columns: 446fr 272fr 242fr 242fr 213fr 41px; background: #434343; border-bottom: 1px solid #383838; }
.tab { display: flex; align-items: center; padding: 0 8px 0 10px; border-right: 1px solid #383838; color: #a6a6a6; font: 600 11px/14px "Open Sans", sans-serif; white-space: nowrap; overflow: hidden; min-width: 0; }
.tab span { flex: 1; }
.tab.active { background: #535353; color: #f0f0f0; }
.tab button { font: 700 14px/14px "Open Sans", sans-serif; color: #bbb; }
.more { padding-left: 16px; }
.view { flex: 1; min-height: 0; display: flex; background: #282828; }
.pasteboard { flex: 1; display: flex; align-items: center; justify-content: center; }
.sheet { position: relative; width: 750px; height: 750px; background: repeating-conic-gradient(#fff 0 25%, #ccc 0 50%) 0 0 / 12px 12px; }
.marker { position: absolute; left: 459px; top: 300px; width: 8px; height: 8px; background: #0f78d7; border: 1px solid #0b5aa4; }
.vscroll { width: 17px; background: #4a4a4a; }
.status { flex: none; height: 17px; display: flex; align-items: center; background: #4a4a4a; }
.pct { width: 48px; padding-left: 7px; background: #434343; height: 100%; line-height: 17px; }
.docinfo { width: 174px; padding-left: 42px; color: #ccc; }

/* panel tabs */
.ptabs { height: 28px; background: #434343; display: flex; align-items: center; padding-right: 6px; flex: none; border-bottom: 1px solid #383838; }
.ptab { height: 28px; padding: 0 10px; font: 700 10px/14px Roboto, sans-serif; color: #a0a0a0; border-right: 1px solid #383838; }
.ptab.active { background: #535353; color: #f0f0f0; }
.layers .ptab { padding: 0 9px; }
.bars { width: 10px; height: 8px; color: #ccc; }
.combo { display: flex; height: 18px; border: 1px solid #666; border-radius: 2px; background: #454545; min-width: 0; }
.combo input { flex: 1; width: 0; min-width: 0; padding-left: 4px; }
.combo button { width: 16px; border-left: 1px solid #666; }

/* character panel floats over the canvas */
.char { position: absolute; right: 0; top: 50px; width: 221px; background: #535353; border: 1px solid #333; border-top: 4px solid #363636; }
.ct1 { width: 64px; }
.ct2 { width: 66px; }
.char .ptab { padding: 0; }
.vbar { width: 1px; height: 11px; background: #aaa; margin: 0 8px 0 7px; }
.charbody { padding: 8px 5px 2px 7px; }
.fontrow { display: grid; grid-template-columns: 122fr 76fr; gap: 9px; }
.metrics { display: grid; grid-template-columns: 18px 78fr 32px 73fr; column-gap: 2px; row-gap: 3px; margin: 9px 2px 8px -2px; align-items: center; }
.metrics > svg:nth-child(4n+3) { justify-self: end; }
.scales { display: grid; grid-template-columns: 18px 55px 1fr 55px; column-gap: 3px; row-gap: 3px; align-items: center; margin: 0 6px 9px -2px; }
.scales .right { justify-self: end; margin-right: 3px; color: #ccc; }
.scales span.right { margin-right: 6px; }
.scales .field { height: 18px; }
.colorbtn { height: 20px; background: #fafafa; border: 1px solid #383838; }
.glyphs { display: grid; grid-template-columns: repeat(8, 23px); column-gap: 1px; margin-left: 8px; font: 700 14px/14px "Liberation Serif", serif; }
.glyphs button { height: 24px; font: inherit; }
.glyphs small { font-size: 10px; align-self: flex-end; margin-bottom: 3px; }
.glyphs sup, .glyphs sub { font-size: 8px; line-height: 8px; }
.glyphs sup { align-self: flex-start; margin-top: 4px; }
.glyphs sub { align-self: flex-end; margin-bottom: 3px; }
.ot { margin-top: 8px; color: #9a9a9a; }
.ot button { font-weight: 400; font-size: 16px; }
.ot .swash { font-size: 20px; }
.over { text-decoration: overline; }
.langrow { display: flex; align-items: center; gap: 7px; margin: 8px 0 0 2px; }
.langrow .sel { width: 68px; }
.langrow .lang { width: 111px; flex: none; }
.aa { font-size: 11px; }
.aa sup { font-size: 10px; line-height: 8px; }

/* icon dock */
.dock { flex: none; width: 40px; padding: 0 2px; display: flex; flex-direction: column; }
.dgroup { background: #535353; height: 40px; border-bottom: 1px solid #383838; display: flex; flex-direction: column; align-items: center; padding-top: 3px; gap: 7px; margin-bottom: 1px; }
.dgroup.two { height: 68px; gap: 3px; }
.dgroup.two button { width: 28px; height: 25px; }
.abar { font: 15px/18px Roboto, sans-serif; white-space: nowrap; }
.fill { flex: 1; background: #535353; }

/* right panels */
.panels { flex: none; width: 287px; padding: 0 2px 0 1px; display: flex; flex-direction: column; }
.panel { background: #535353; margin-bottom: 3px; display: flex; flex-direction: column; }
.colorbody { display: flex; padding: 6px 16px 6px 8px; align-items: flex-start; }
.fgbg.big { margin: 2px 7px 0 0; }
.field2d { position: relative; overflow: hidden; flex: 1; height: 91px; background: linear-gradient(transparent, #000), linear-gradient(90deg, #fff, #f00020); }
.ring { position: absolute; left: 76px; bottom: 0; }
.huearrow { margin: -4px 1px 0 8px; }
.hue { width: 19px; height: 91px; background: linear-gradient(#ff0010, #f0f 20%, #00f 34%, #0ff 50%, #0f0 67%, #ff0 84%, #f00); }
.props { height: 365px; }
.phead { height: 34px; display: flex; align-items: center; gap: 6px; padding-left: 10px; border-bottom: 1px solid #383838; }
.phead b, .libgroup b { font: 700 11px/14px Roboto, sans-serif; }
.pic { width: 23px; height: 23px; display: grid; place-items: center; }
.pbody { flex: 1; display: flex; justify-content: space-between; padding: 2px 0 25px; }
.xywh { display: grid; grid-template-columns: 14px 61px 26px 14px 61px; column-gap: 6px; grid-auto-rows: 27px; align-items: center; padding: 5px 0 0 12px; align-content: start; }
.xywh label { color: #ccc; text-align: right; }
.linkbtn { height: 27px; }
.pscroll { width: 15px; background: #4a4a4a; }

/* layers */
.layers { flex: 1; min-height: 0; margin-bottom: 0; }
.lrow { flex: none; height: 28px; display: flex; align-items: center; padding-left: 3px; border-bottom: 1px solid #404040; }
.lrow.filter { height: 32px; padding-top: 6px; }
.lrow .combo { width: 53px; }
.kind .mag { margin-left: 8px; }
.kind select { padding-left: 3px; }
.ficons { display: flex; align-items: center; gap: 12px; margin: 0 12px; }
.pctlab { width: 42px; text-align: right; margin: 0 3px 0 2px; }
.pctlab.fill-label { width: 32px; }
.lock { height: 30px; border: 0; padding-left: 6px; }
.locklab { width: 23px; }
.licons { display: flex; align-items: center; gap: 9px; margin-left: 10px; flex: none; width: 102px; }
.listwrap { flex: 1; min-height: 0; display: flex; border-bottom: 1px solid #383838; }
.list { flex: 1; overflow: hidden; }
.list li { display: flex; height: 99px; border-bottom: 1px solid #404040; }
.vis { width: 30px; border-right: 1px solid #404040; padding: 15px 0 0 9px; }
.vis input { display: block; appearance: none; width: 12px; height: 12px; border: 1px solid #484848; border-right-color: #6a6a6a; border-bottom-color: #6a6a6a; }
.lay { flex: 1; }
.lname { height: 41px; display: flex; align-items: center; padding-left: 15px; }
.lname span { flex: 1; padding: 3px 0 0 17px; }
.lname em, .lfoot em { font: italic 14px/16px "Open Sans", sans-serif; padding-right: 4px; }
.lname button { width: 10px; height: 41px; background: #454545; }
.lay p { display: flex; align-items: center; gap: 5px; height: 19px; padding-left: 20px; }
.lay p.in { padding-left: 37px; }
.eye { width: 13px; height: 10px; color: #a8a8a8; }
.lscroll { width: 15px; background: #4a4a4a; margin-left: 1px; display: flex; flex-direction: column; align-items: center; padding: 5px 0; }
.lscroll svg { color: #888; }
.lscroll i { width: 12px; height: 24px; background: #6a6a6a; margin: 2px 0 auto; }
.lfoot { flex: none; height: 24px; display: flex; align-items: center; justify-content: space-between; padding: 0 28px 0 82px; }
.lfoot em { padding: 0; }

/* libraries column */
.libs { flex: none; width: 95px; display: flex; flex-direction: column; }
.libgroup { height: 41px; background: #535353; border-bottom: 1px solid #383838; display: flex; flex-direction: column; align-items: center; padding-top: 3px; gap: 8px; }
.libgroup button { gap: 7px; }

/* taskbar */
.taskbar { flex: none; height: 40px; display: flex; align-items: center; border-top: 1px solid #d0d0d0; background: linear-gradient(90deg, #7e7e7e, #9a9a9a 15%, #a8a8a8 35%, #c2c2c2 44%, #a8a8a8 52%, #b4b4b4 62%, #888 67%, #7c7c7c 80%, #6e6e6e); font: 11px/14px "Open Sans", sans-serif; color: #fff; overflow: hidden; }
.start { margin: 0 12px 0 8px; }
.dots { width: 9px; height: 30px; background: radial-gradient(circle, #333 1px, transparent 1px) 0 0 / 3px 4px; }
.apps { display: flex; gap: 4px; margin-left: 9px; }
.app { width: 58px; height: 38px; border: 1px solid transparent; border-radius: 3px; }
.app svg { width: 31px; height: 31px; }
.app.run { border-color: #555; box-shadow: inset 0 0 0 1px #e2e2e2; background: linear-gradient(135deg, #aaa, #d0d0d0 45%, #b4b4b4); }
.app.stack { border-right: 4px double #555; padding-right: 2px; }
.app.lit { background: #e6e6e6; }
.deskbar { display: flex; align-items: center; margin-left: 5px; width: 404px; }
.deskbar a { display: flex; align-items: center; gap: 4px; color: inherit; text-decoration: none; margin: 0 0 11px 6px; }
.deskbar .julia { margin-left: 98px; }
.deskbar button { margin: 0 11px 24px auto; font-size: 16px; }
.tray { display: flex; align-items: center; gap: 8px; }
.tray svg:first-child { margin-right: 2px; }
.clock { display: flex; flex-direction: column; align-items: center; gap: 3px; width: 80px; }
.peek { width: 14px; height: 40px; border: 1px solid #555; box-shadow: inset 0 0 0 1px #999; background: #808080; }
```
